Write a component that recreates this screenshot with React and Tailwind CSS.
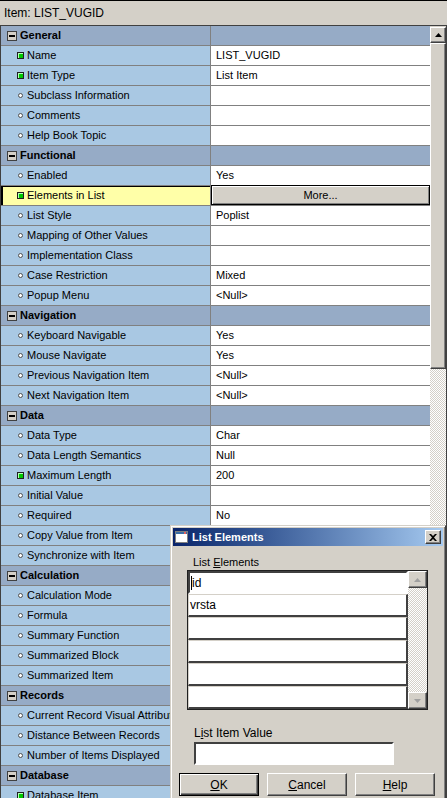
import React from 'react';

const rows = [
  { h: 'General' },
  { l: 'Name', v: 'LIST_VUGID', req: true },
  { l: 'Item Type', v: 'List Item', req: true },
  { l: 'Subclass Information' },
  { l: 'Comments' },
  { l: 'Help Book Topic' },
  { h: 'Functional' },
  { l: 'Enabled', v: 'Yes' },
  { l: 'Elements in List', req: true, sel: true, btn: 'More...' },
  { l: 'List Style', v: 'Poplist' },
  { l: 'Mapping of Other Values' },
  { l: 'Implementation Class' },
  { l: 'Case Restriction', v: 'Mixed' },
  { l: 'Popup Menu', v: '<Null>' },
  { h: 'Navigation' },
  { l: 'Keyboard Navigable', v: 'Yes' },
  { l: 'Mouse Navigate', v: 'Yes' },
  { l: 'Previous Navigation Item', v: '<Null>' },
  { l: 'Next Navigation Item', v: '<Null>' },
  { h: 'Data' },
  { l: 'Data Type', v: 'Char' },
  { l: 'Data Length Semantics', v: 'Null' },
  { l: 'Maximum Length', v: '200', req: true },
  { l: 'Initial Value' },
  { l: 'Required', v: 'No' },
  { l: 'Copy Value from Item' },
  { l: 'Synchronize with Item' },
  { h: 'Calculation' },
  { l: 'Calculation Mode' },
  { l: 'Formula' },
  { l: 'Summary Function' },
  { l: 'Summarized Block' },
  { l: 'Summarized Item' },
  { h: 'Records' },
  { l: 'Current Record Visual Attribute Group' },
  { l: 'Distance Between Records' },
  { l: 'Number of Items Displayed' },
  { h: 'Database' },
  { l: 'Database Item', req: true },
];

const raised =
  'bg-[#d4d0c8] border border-t-white border-l-white border-r-[#404040] border-b-[#404040] shadow-[inset_-1px_-1px_0_#808080]';
const checker =
  'bg-[image:repeating-conic-gradient(#d4d0c8_0_25%,#ffffff_0_50%)] bg-[length:2px_2px]';

const Bullet = ({ req }) =>
  req ? (
    <span className="block w-[7px] h-[7px] bg-[#00c800] border border-[#202020] shadow-[inset_1px_1px_0_#b8ffb8]" />
  ) : (
    <span className="block w-[5px] h-[5px] ml-[1px] rounded-full border border-[#505050] bg-white" />
  );

const Row = ({ r }) => {
  if (r.h) {
    return (
      <div className="flex shrink-0 h-[20px] bg-[#96abc6] border-b border-[#808080]">
        <div className="w-[210px] flex items-center border-r border-[#808080] pl-[6px]">
          <span className="w-[10px] h-[10px] border border-[#404040] bg-[#d4d0c8] flex items-center justify-center">
            <span className="block w-[6px] h-[2px] bg-black" />
          </span>
          <span className="ml-[3px] font-bold text-black">{r.h}</span>
        </div>
        <div className="flex-1" />
      </div>
    );
  }
  return (
    <div className="flex shrink-0 h-[20px] border-b border-[#808080]">
      <div
        className={`w-[210px] shrink-0 flex items-center border-r border-[#808080] pl-[16px] overflow-hidden whitespace-nowrap ${
          r.sel ? 'bg-[#ffffa8] shadow-[inset_2px_1px_0_#000]' : 'bg-[#a9c8e3]'
        }`}
      >
        <span className="w-[10px] shrink-0 flex items-center">
          <Bullet req={r.req} />
        </span>
        <span className="text-black">{r.l}</span>
      </div>
      {r.btn ? (
        <div className="flex-1 bg-white">
          <div className="h-[20px] -mt-[1px] bg-[#d4d0c8] border border-black shadow-[inset_1px_1px_0_#fff,inset_-1px_-1px_0_#808080] flex items-center justify-center text-black">
            {r.btn}
          </div>
        </div>
      ) : (
        <div className="flex-1 bg-white flex items-center pl-[5px] text-black whitespace-nowrap">
          {r.v}
        </div>
      )}
    </div>
  );
};

const Arrow = ({ up, gray }) => (
  <svg width="7" height="4" viewBox="0 0 7 4">
    <path d={up ? 'M3.5 0 L7 4 L0 4 Z' : 'M0 0 L7 0 L3.5 4 Z'} fill={gray ? '#a0a0a0' : '#000'} />
  </svg>
);

const Btn = ({ children, def }) => (
  <div
    className={`w-[80px] h-[23px] flex items-center justify-center text-[12px] text-black ${
      def
        ? 'bg-[#d4d0c8] border border-black shadow-[inset_1px_1px_0_#fff,inset_-1px_-1px_0_#404040,inset_-2px_-2px_0_#808080]'
        : raised
    }`}
  >
    {children}
  </div>
);

const ListElements = () => (
  <div className="absolute left-[170px] top-[525px] w-[276px] h-[280px] bg-[#d4d0c8] border border-t-[#d4d0c8] border-l-[#d4d0c8] border-r-[#404040] shadow-[inset_1px_1px_0_#fff,inset_-1px_0_0_#808080] p-[2px]">
    <div className="h-[18px] flex items-center bg-linear-to-r from-[#0a246a] to-[#a6caf0] pl-[2px] pr-[2px]">
      <svg width="13" height="12" viewBox="0 0 13 12">
        <rect x="0.5" y="0.5" width="12" height="11" fill="#fff" stroke="#808080" />
        <rect x="1" y="1" width="11" height="2" fill="#3a6ea5" />
        <rect x="9" y="1" width="2" height="2" fill="#e06060" />
      </svg>
      <span className="ml-[4px] text-white font-bold text-[11px]">List Elements</span>
      <div className={`ml-auto w-[16px] h-[14px] flex items-center justify-center ${raised}`}>
        <svg width="8" height="7" viewBox="0 0 8 7">
          <path d="M0 0 L2 0 L4 2 L6 0 L8 0 L5 3.5 L8 7 L6 7 L4 5 L2 7 L0 7 L3 3.5 Z" fill="#000" />
        </svg>
      </div>
    </div>

    <div className="ml-[20px] mt-[10px] h-[13px] leading-[13px] text-black">
      List <span className="underline">E</span>lements
    </div>
    <div className="ml-[14px] mt-[1px] w-[241px] h-[140px] border border-[#202020] flex">
      <div className="w-[220px] flex flex-col">
        <div className="h-[23px] bg-white border-2 border-t-[#404040] border-l-[#404040] border-r-white border-b-white flex items-center pl-[1px] text-[12px] text-black">
          <span className="w-[1px] h-[14px] bg-black" />
          id
        </div>
        {['vrsta', '', '', '', ''].map((t, i) => (
          <div
            key={i}
            className="h-[23px] bg-white border border-t-[#d4d0c8] border-l-[#d4d0c8] border-r-2 border-b-2 border-r-[#404040] border-b-[#404040] flex items-center pl-[1px] text-[12px] text-black"
          >
            {t}
          </div>
        ))}
      </div>
      <div className="flex-1 flex flex-col">
        <div className={`h-[17px] flex items-center justify-center ${raised}`}>
          <Arrow up gray />
        </div>
        <div className={`flex-1 ${checker}`} />
        <div className={`h-[17px] flex items-center justify-center ${raised}`}>
          <Arrow gray />
        </div>
      </div>
    </div>

    <div className="ml-[21px] mt-[17px] h-[13px] leading-[13px] text-[12px] text-black">
      L<span className="underline">i</span>st Item Value
    </div>
    <div className="ml-[21px] mt-[2px] w-[200px] h-[23px] bg-white border-2 border-t-[#404040] border-l-[#404040] border-r-white border-b-white" />

    <div className="flex gap-[8px] ml-[6px] mt-[8px]">
      <Btn def>
        <span className="underline">O</span>K
      </Btn>
      <Btn>
        <span className="underline">C</span>ancel
      </Btn>
      <Btn>
        <span className="underline">H</span>elp
      </Btn>
    </div>
  </div>
);

export default function App() {
  return (
    <div className="relative w-[447px] h-[798px] overflow-hidden bg-[#d4d0c8] font-['Liberation_Sans',Arial,sans-serif] text-[11px] leading-none">
      <div className="h-[26px] border-t border-black border-b border-b-[#404040] flex items-center pl-[4px] text-[12px] text-black">
        Item: LIST_VUGID
      </div>
      <div className="flex h-[772px] border-l border-[#404040] border-r border-r-[#404040]">
        <div className="flex-1 flex flex-col overflow-hidden">
          {rows.map((r, i) => (
            <Row key={i} r={r} />
          ))}
        </div>
        <div className="w-[16px] flex flex-col">
          <div className={`h-[16px] mt-[1px] flex items-center justify-center ${raised}`}>
            <Arrow up />
          </div>
          <div className={`h-[326px] ${raised}`} />
          <div className={`flex-1 ${checker}`} />
        </div>
      </div>
      <ListElements />
    </div>
  );
}
